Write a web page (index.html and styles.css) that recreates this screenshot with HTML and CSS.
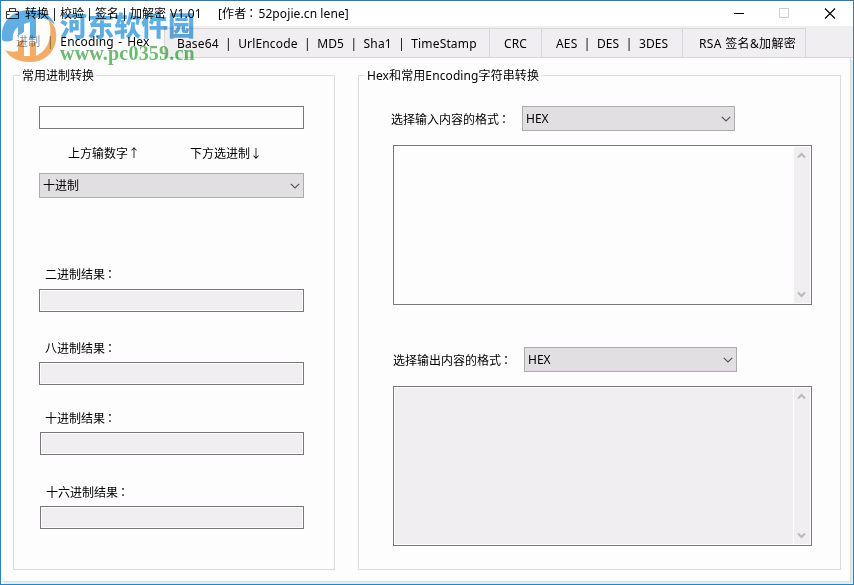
FILE: index.html
```html
<!DOCTYPE html>
<html lang="zh-CN">
<head>
<meta charset="utf-8">
<title>转换 | 校验 | 签名 | 加解密 V1.01</title>
<link rel="stylesheet" href="styles.css">
</head>
<body>
<div class="window">
  <header class="titlebar">
    <svg class="app-icon" width="15" height="14" viewBox="0 0 15 14" fill="none" stroke="#333"><path d="M.5 4.5h12v7h-12zM3.5 4.5v-3h6v3M.5 7.5h3M9.5 7.5h3"/></svg>
    <div class="title"><span>转换</span><i>|</i><span>校验</span><i>|</i><span>签名</span><i>|</i><span>加解密</span><span class="version">V1.01</span><span class="author">[作者<b class="colon" lang="zh-TW">：</b>52pojie.cn lene]</span></div>
    <div class="controls">
      <svg width="12" height="12" viewBox="0 0 12 12" stroke="#000"><path d="M0 5.5h10"/></svg>
      <svg width="12" height="12" viewBox="0 0 12 12" stroke="#ccc" fill="none"><path d="M.5 .5h9v9h-9z"/></svg>
      <svg width="12" height="12" viewBox="0 0 12 12" stroke="#000" stroke-width="1.1"><path d="M1 .5l10 10M11 .5L1 10.5"/></svg>
    </div>
  </header>
  <nav class="tabs">
    <div class="tab selected"><span class="faded">进制</span><i class="faded">|</i><span class="enc">Encoding</span><span class="dash">-</span><span>Hex</span></div>
    <div class="tab hashes"><span>Base64</span><i>|</i><span>UrlEncode</span><i>|</i><span>MD5</span><i>|</i><span>Sha1</span><i>|</i><span>TimeStamp</span></div>
    <div class="tab crc"><span>CRC</span></div>
    <div class="tab ciphers"><span>AES</span><i>|</i><span>DES</span><i>|</i><span>3DES</span></div>
    <div class="tab rsa"><span>RSA 签名&amp;加解密</span></div>
  </nav>
  <main class="page">
    <section class="group radix">
      <h2>常用进制转换</h2>
      <div class="field editable"></div>
      <div class="hints"><span>上方输数字<b class="arrow">↑</b></span><span>下方选进制<b class="arrow">↓</b></span></div>
      <div class="select"><span>十进制</span><svg width="10" height="6" viewBox="0 0 10 6"><path d="M.8 .8L5 5 9.2 .8"/></svg></div>
      <div class="result binary"><label>二进制结果<b class="colon" lang="zh-TW">：</b></label><div class="field"></div></div>
      <div class="result octal"><label>八进制结果<b class="colon" lang="zh-TW">：</b></label><div class="field"></div></div>
      <div class="result decimal"><label>十进制结果<b class="colon" lang="zh-TW">：</b></label><div class="field"></div></div>
      <div class="result hexa"><label>十六进制结果<b class="colon" lang="zh-TW">：</b></label><div class="field"></div></div>
    </section>
    <section class="group encoding">
      <h2>Hex和常用Encoding字符串转换</h2>
      <div class="format"><label>选择输入内容的格式<b class="colon" lang="zh-TW">：</b></label><div class="select"><span>HEX</span><svg width="10" height="6" viewBox="0 0 10 6"><path d="M.8 .8L5 5 9.2 .8"/></svg></div></div>
      <div class="area editable"><div class="text"></div><div class="scroll"><svg width="9" height="7" viewBox="0 0 9 7"><path d="M1 5.5L4.5 2 8 5.5"/></svg><svg width="9" height="7" viewBox="0 0 9 7"><path d="M1 1.5L4.5 5 8 1.5"/></svg></div></div>
      <div class="format output"><label>选择输出内容的格式<b class="colon" lang="zh-TW">：</b></label><div class="select"><span>HEX</span><svg width="10" height="6" viewBox="0 0 10 6"><path d="M.8 .8L5 5 9.2 .8"/></svg></div></div>
      <div class="area"><div class="text"></div><div class="scroll"><svg width="9" height="7" viewBox="0 0 9 7"><path d="M1 5.5L4.5 2 8 5.5"/></svg><svg width="9" height="7" viewBox="0 0 9 7"><path d="M1 1.5L4.5 5 8 1.5"/></svg></div></div>
    </section>
  </main>
  <div class="watermark">
    <svg width="58" height="64" viewBox="0 0 58 64">
      <path fill="#399bdd" d="M1 39C-1 21 11 9 29 9c13 0 22 6 25 15-5-5-12-8-19-7v20l-6 1V21l-6 2v8l-6 4v-9c-4 3-6 8-5 13C8 41 4 41 1 39z"/>
      <path fill="#f39a43" d="M47 18c8 6 9 14 8 22-3 14-13 21-26 21-12 0-20-4-25-12 5 2 9 2 13 1v-9l6-3v17h6V42l6-1v14c8-4 13-11 14-20 1-7 0-12-2-17z"/>
    </svg>
    <div class="mark-text"><div class="mark-name">河东软件园</div><div class="mark-url">www.pc0359.cn</div></div>
  </div>
</div>
</body>
</html>
```
FILE: styles.css
```css
* { box-sizing: border-box; }
body {
  margin: 0;
  font: 12px/16px "Noto Sans", "Noto Sans CJK SC", sans-serif;
  color: #000;
}
i, b { font-style: normal; font-weight: normal; }
svg { display: block; flex: none; }
.window {
  position: relative;
  display: flex;
  flex-direction: column;
  width: 854px;
  height: 585px;
  border: 1px solid #2d84bd;
  border-top-color: #3d759d;
  background: #fdfdfd;
  overflow: hidden;
  white-space: nowrap;
}
.colon { margin: 0 1px 0 -1px; font-family: "Noto Sans CJK TC", sans-serif; line-height: 1; }

.titlebar { display: flex; align-items: center; height: 25px; padding-left: 5px; flex: none; background: #fff; }
.app-icon { margin-right: 4px; }
.title { display: flex; flex: 1; }
.title i { width: 11px; text-align: center; }
.version { margin-left: 4px; width: 48px; letter-spacing: .15px; }
.author { letter-spacing: .1px; }
.controls { display: flex; gap: 33px; padding-right: 17px; }

.tabs { display: flex; align-items: flex-end; height: 32px; flex: none; background: #f0eef1; box-shadow: inset 0 -1px #d8d6da; }
.tab { display: flex; align-items: center; height: 30px; padding-top: 2px; border: solid #d8d6da; border-width: 1px 1px 1px 0; letter-spacing: .15px; }
.tab i { text-align: center; }
.selected { width: 164px; height: 32px; padding: 0 0 0 15px; border-top: 0; border-bottom: 0; background: #fdfdfd; }
.selected i { width: 20px; }
.enc { width: 58px; }
.dash { width: 9px; }
.faded { color: #8d9396; }
.hashes { width: 325px; padding-left: 12px; }
.hashes i { width: 19.5px; }
.crc { width: 52px; padding-left: 14px; }
.ciphers { width: 141px; padding-left: 14px; }
.ciphers i { width: 19.5px; }
.rsa { width: 123px; padding-left: 16px; letter-spacing: .35px; }

.page { display: flex; gap: 23px; flex: 1; margin: 0 2px 2px 1px; padding: 17px 9px 11px 11px; border-right: 1px solid #dcdce0; border-bottom: 1px solid #dfe4e8; box-shadow: 2px 2px #d9effb; }
.group { border: 1px solid #dcdcdc; }
h2 { width: max-content; height: 18px; margin: -9px 0 -2px 6px; padding: 0 2px; font-size: 12px; line-height: 17px; font-weight: normal; background: #fdfdfd; }
.radix { width: 322px; padding: 0 30px 0 25px; }
.radix h2 { margin-left: -19px; }
.field { height: 23px; border: 1px solid #7a777c; background: #f0eef1; box-shadow: inset 0 0 0 1px #fdfdfd; }
.editable, .field.editable { background: #fdfdfd; }
.radix > .field { margin-top: 23px; }
.hints { display: flex; gap: 50px; height: 44px; padding: 16px 0 0 29px; }
.arrow { display: inline-block; width: 12px; text-align: center; font-family: "Noto Sans CJK SC", sans-serif; }
.select { display: flex; align-items: center; justify-content: space-between; height: 25px; padding: 0 3px 0 3px; border: 1px solid #adabae; background: #e1dfe2; }
.select path { fill: none; stroke: #555; stroke-width: 1.2; }
.result { display: flex; flex-direction: column; }
.result label { height: 16px; margin: 0 0 6px 6px; }
.binary { margin-top: 69px; }
.octal { margin-top: 29px; }
.octal label, .decimal label { margin-bottom: 5px; }
.decimal { margin-top: 26px; }
.hexa { margin-top: 30px; }
.hexa label { margin: 0 0 5px 7px; }
.decimal .field, .hexa .field { margin-left: 1px; }

.encoding { width: 483px; padding: 0 28px 0 34px; }
.encoding h2 { margin-left: -28px; letter-spacing: .1px; }
.format { display: flex; margin: 23px 0 14px -3px; }
.format label { width: 132px; padding: 6px 0 0 1px; }
.format .select { width: 213px; }
.format.output { margin: 42px 0 14px -1px; }
.area { display: flex; gap: 1px; height: 160px; padding: 1px; border: 1px solid #7a777c; background: #fdfdfd; }
.text { flex: 1; background: #f0eef1; }
.editable .text { background: #fdfdfd; }
.scroll { display: flex; flex-direction: column; align-items: center; justify-content: space-between; width: 16px; padding: 5px 2px 5px 0; background: #f0eef1; }
.scroll path { fill: none; stroke: #bab8bb; stroke-width: 2; }

/* translucent site stamp laid over the title and tabs */
.watermark { position: absolute; left: 0; top: 0; display: flex; pointer-events: none; opacity: .8; mix-blend-mode: multiply; }
.mark-text { margin: 9px 0 0 1px; }
.mark-name { height: 29px; font: 900 27px/29px "Noto Sans CJK SC", sans-serif; color: #369bdc; }
.mark-url { height: 24px; font: bold 20px/28px "Liberation Serif", serif; letter-spacing: .2px; color: #48ac4c; }
```
